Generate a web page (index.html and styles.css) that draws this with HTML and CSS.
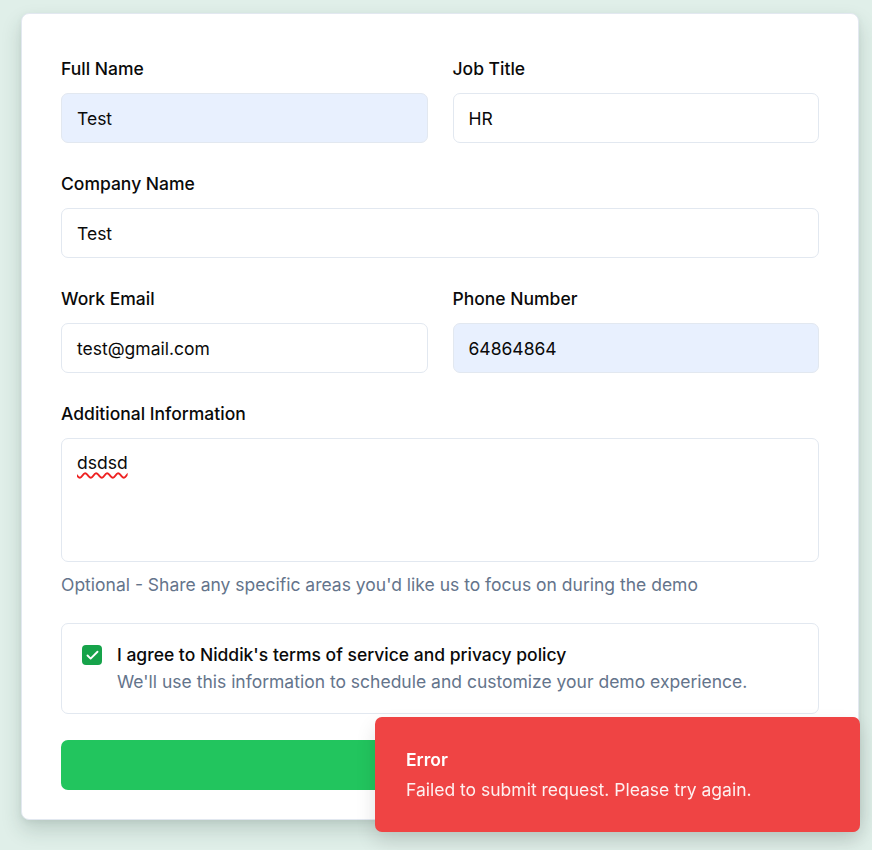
FILE: index.html
```html
<!DOCTYPE html>
<html>
<head>
<meta charset="utf-8">
<link rel="stylesheet" href="styles.css">
</head>
<body>
<div class="card">
  <form class="form">
    <div class="row two">
      <div class="field">
        <label class="label">Full Name</label>
        <div class="input autofill">Test</div>
      </div>
      <div class="field">
        <label class="label">Job Title</label>
        <div class="input">HR</div>
      </div>
    </div>
    <div class="row">
      <div class="field">
        <label class="label">Company Name</label>
        <div class="input">Test</div>
      </div>
    </div>
    <div class="row two">
      <div class="field">
        <label class="label">Work Email</label>
        <div class="input">test@gmail.com</div>
      </div>
      <div class="field">
        <label class="label">Phone Number</label>
        <div class="input autofill">64864864</div>
      </div>
    </div>
    <div class="row last">
      <div class="field">
        <label class="label">Additional Information</label>
        <div class="textarea"><span class="misspelled">dsdsd</span></div>
        <p class="helper">Optional - Share any specific areas you'd like us to focus on during the demo</p>
      </div>
    </div>
    <div class="consent">
      <span class="checkbox">
        <svg width="15" height="15" viewBox="0 0 24 24" fill="none" stroke="#fff" stroke-width="3" stroke-linecap="round" stroke-linejoin="round"><path d="M20 6 9 17l-5-5"/></svg>
      </span>
      <div class="consent-text">
        <div class="consent-title">I agree to Niddik's terms of service and privacy policy</div>
        <div class="consent-sub">We'll use this information to schedule and customize your demo experience.</div>
      </div>
    </div>
    <button type="button" class="submit">Request Demo</button>
  </form>
</div>
<div class="toast">
  <div class="toast-title">Error</div>
  <div class="toast-msg">Failed to submit request. Please try again.</div>
</div>
</body>
</html>
```

FILE: styles.css
```css
* { box-sizing: border-box; }
html, body { margin: 0; height: 100%; }
body {
  background: #e0efe9;
  font-family: Inter, "Noto Sans", sans-serif;
  color: #0a0a0a;
  padding: 13px 13px 0 21px;
  overflow: hidden;
}
.card {
  background: #fff;
  border-radius: 8px;
  border: 1px solid #e2e8f0;
  box-shadow: 0 10px 20px rgba(30, 60, 50, 0.18), 0 2px 6px rgba(0,0,0,0.05);
  padding: 42px 39px 30px 39px;
  height: 807px;
}
.form { display: flex; flex-direction: column; }
.row { display: grid; grid-template-columns: 1fr; gap: 25px; margin-bottom: 28px; }
.row.two { grid-template-columns: 1fr 1fr; }
.row.last { margin-bottom: 26px; }
.field { display: flex; flex-direction: column; }
.label {
  font-size: 17.5px;
  font-weight: 470;
  line-height: 25px;
  margin-bottom: 12px;
  color: #0a0a0a;
}
.input {
  height: 50px;
  border: 1px solid #e2e8f0;
  border-radius: 7px;
  padding: 0 15px;
  font-size: 17.5px;
  display: flex;
  align-items: center;
  color: #0a0a0a;
  background: #fff;
}
.input.autofill { background: #e8f0fe; }
.textarea {
  height: 124px;
  border: 1px solid #e2e8f0;
  border-radius: 7px;
  padding: 11px 15px;
  font-size: 17.5px;
  line-height: 25px;
  color: #0a0a0a;
}
.misspelled {
  text-decoration: underline wavy #ee2222;
  text-decoration-thickness: 1.5px;
  text-underline-offset: 3px;
}
.helper {
  margin: 10px 0 0;
  font-size: 17.5px;
  line-height: 25px;
  color: #64748b;
}
.consent {
  border: 1px solid #e2e8f0;
  border-radius: 7px;
  padding: 18px 20px 19px;
  display: flex;
  align-items: flex-start;
  gap: 15px;
}
.checkbox {
  width: 20px;
  height: 20px;
  margin-top: 3px;
  border-radius: 4px;
  background: #16a34a;
  display: flex;
  align-items: center;
  justify-content: center;
  flex: none;
}
.consent-title { font-size: 17.5px; font-weight: 470; line-height: 25px; }
.consent-sub { font-size: 17.5px; line-height: 25px; color: #64748b; margin-top: 2px; }
.submit {
  margin-top: 26px;
  height: 50px;
  border: none;
  border-radius: 7px;
  background: #22c55e;
  color: #fff;
  font-family: inherit;
  font-size: 17.5px;
  font-weight: 600;
}
.toast {
  position: fixed;
  left: 375px;
  top: 717px;
  width: 485px;
  height: 115px;
  background: #ef4444;
  border-radius: 7px;
  padding: 30px 31px;
  color: #fff;
  box-shadow: 0 10px 20px rgba(0,0,0,0.12);
}
.toast-title { font-size: 17.5px; font-weight: 600; line-height: 25px; }
.toast-msg { font-size: 17.5px; line-height: 25px; margin-top: 5px; opacity: 0.92; }
```
